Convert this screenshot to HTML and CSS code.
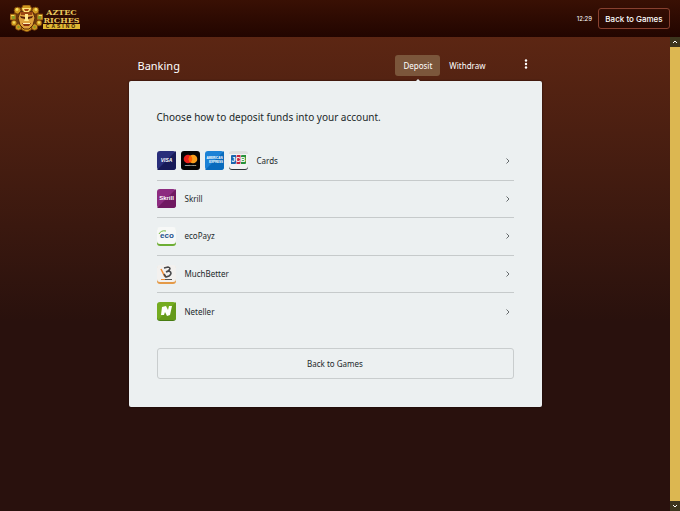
FILE: index.html
```html
<!DOCTYPE html>
<html lang="en">
<head>
    <meta charset="UTF-8">
    <meta name="viewport" content="width=device-width, initial-scale=1.0">
    <title>Banking - Aztec Riches Casino</title>
    <link rel="stylesheet" href="styles.css">
</head>
<body>
    <header class="header">
        <a class="logo" href="#" aria-label="Aztec Riches Casino">
            <svg class="logo-mask" viewBox="0 0 33 27" aria-hidden="true">
                <ellipse cx="16.500" cy="13.500" rx="14" ry="12" fill="#6b3b0c"/>
                <g fill="#cf981f" stroke="#6e360a" stroke-width=".8">
                    <path d="M11 4 13 0h7l2 4-2 4h-7z"/>
                    <circle cx="7.500" cy="5.500" r="3.400"/><circle cx="25.500" cy="5.500" r="3.400"/>
                    <path d="M0 9h6v6H0zM27 9h6v6h-6z"/>
                    <circle cx="4" cy="18" r="3"/><circle cx="29" cy="18" r="3"/>
                    <circle cx="8.500" cy="22" r="3.200"/><circle cx="24.500" cy="22" r="3.200"/>
                    <path d="M11 21h11l-1 4-4 2-5-2z"/>
                </g>
                <g fill="#f4dc5d">
                    <path d="M1 10h3v1H1zM29 10h3v1h-3z"/>
                    <circle cx="7" cy="4.500" r="1.400"/><circle cx="26" cy="4.500" r="1.400"/>
                    <circle cx="4" cy="17.500" r="1.200"/><circle cx="29" cy="17.500" r="1.200"/>
                </g>
                <g fill="#8a9a28">
                    <path d="M2 11h3v3H2zM28 11h3v3h-3z"/>
                    <circle cx="8.500" cy="22" r="1.200"/><circle cx="24.500" cy="22" r="1.200"/>
                </g>
                <path d="M10 7q6-3 13 0l2 6-2 7-4 4h-5l-4-4-2-7z" fill="#dfa23d" stroke="#5d2908"/>
                <path d="M10 7h13l-1 3H11z" fill="#9c4813"/>
                <path d="M12 3h9l-2 4h-5z" fill="#ffe278"/>
                <path d="M14 4h5l-1 2h-3z" fill="#a54713"/>
                <path d="M10 11l5 1v2l-4-1zM23 11l-5 1v2l4-1z" fill="#542009"/>
                <path d="M15 9h3v5l1 2h-5l1-2z" fill="#ffe88d"/>
                <path d="M12 18h9l-2 3h-5z" fill="#8b3311"/>
                <path d="M13 18h7v1h-7z" fill="#fff0b5"/>
            </svg>
            <span class="logo-text">
                <span class="logo-name">AZTEC</span>
                <span class="logo-name">RICHES</span>
                <span class="logo-casino">CASINO</span>
            </span>
        </a>
        <div class="header-right">
            <time class="clock">12:29</time>
            <button class="header-button" type="button">Back to Games</button>
        </div>
    </header>

    <div class="page">
        <main class="content">
            <div class="banking">
                <div class="toolbar">
                    <h1>Banking</h1>
                    <nav class="tabs" aria-label="Banking">
                        <a class="tab active" href="#" aria-current="page">Deposit</a>
                        <a class="tab" href="#">Withdraw</a>
                    </nav>
                    <button class="more" type="button" aria-label="More options">
                        <svg viewBox="0 0 4 10"><circle cx="2" cy="1.500" r="1.200"/><circle cx="2" cy="5" r="1.200"/><circle cx="2" cy="8.500" r="1.200"/></svg>
                    </button>
                </div>

                <section class="card">
                    <h2>Choose how to deposit funds into your account.</h2>
                    <ul class="methods">
                        <li>
                            <a class="method" href="#">
                                <span class="icons" aria-hidden="true">
                                    <svg class="icon" viewBox="0 0 19 19"><rect width="19" height="19" rx="3" fill="#292e7b"/><path d="M19 0v16a3 3 0 0 1-3 3H0z" fill="#171a59"/><text class="visa" x="9.500" y="11">VISA</text></svg>
                                    <svg class="icon" viewBox="0 0 19 19"><rect width="19" height="19" rx="3" fill="#050505"/><circle cx="7" cy="8" r="4.300" fill="#eb201b"/><circle cx="12" cy="8" r="4.300" fill="#f79e1b"/><path d="M9.500 4.500a4.300 4.300 0 0 1 0 7 4.300 4.300 0 0 1 0-7" fill="#ff5f00"/><text class="mastercard" x="9.500" y="15">mastercard</text></svg>
                                    <svg class="icon" viewBox="0 0 19 19"><rect width="19" height="19" rx="3" fill="#1c82d6"/><path d="M19 0v16a3 3 0 0 1-3 3H0z" fill="#086abd"/><text class="amex" x="9.500" y="8">AMERICAN</text><text class="amex" x="11" y="12">EXPRESS</text></svg>
                                    <svg class="icon" viewBox="0 0 19 19"><rect y="1" width="19" height="18" rx="3" fill="#303539"/><rect width="19" height="18" rx="3" fill="#f3f3f3"/><path d="M0 3a3 3 0 0 1 3-3h13a3 3 0 0 1 3 3H0z" fill="#dedede"/><path d="M2 5q0-1 1-1h4v8q0 1-1 1H2z" fill="#1c65ac"/><path d="M7.500 5q0-1 1-1h3v8q0 1-1 1h-3z" fill="#c52440"/><path d="M12 5q0-1 1-1h4v8q0 1-1 1h-4z" fill="#27913a"/><text class="jcb" x="9.500" y="11">JCB</text></svg>
                                </span>
                                <span>Cards</span>
                                <svg class="chevron" viewBox="0 0 4 6" aria-hidden="true"><path d="M.5.5 3 3 .5 5.500"/></svg>
                            </a>
                        </li>
                        <li>
                            <a class="method" href="#">
                                <svg class="icon" viewBox="0 0 19 19" aria-hidden="true"><rect width="19" height="19" rx="3" fill="#8d2c80"/><path d="M19 0v16a3 3 0 0 1-3 3H0z" fill="#701961"/><text class="skrill" x="9.500" y="11">Skrill</text></svg>
                                <span>Skrill</span>
                                <svg class="chevron" viewBox="0 0 4 6" aria-hidden="true"><path d="M.5.5 3 3 .5 5.500"/></svg>
                            </a>
                        </li>
                        <li>
                            <a class="method" href="#">
                                <svg class="icon" viewBox="0 0 19 19" aria-hidden="true"><rect y="1" width="19" height="18" rx="3" fill="#6eae35"/><rect width="19" height="17" rx="3" fill="#f7f8f7"/><path d="M2 7q2-4 7-3" fill="none" stroke="#73b83b"/><text class="eco" x="10" y="11">eco</text></svg>
                                <span>ecoPayz</span>
                                <svg class="chevron" viewBox="0 0 4 6" aria-hidden="true"><path d="M.5.5 3 3 .5 5.500"/></svg>
                            </a>
                        </li>
                        <li>
                            <a class="method" href="#">
                                <svg class="icon" viewBox="0 0 19 19" aria-hidden="true"><rect y="1" width="19" height="18" rx="3" fill="#e49a48"/><rect width="19" height="17" rx="3" fill="#f3f1ef"/><path d="m4 4 4 8" stroke="#ef8a33" stroke-width="1.500"/><path d="m7 3 4-1q4 1 0 4l-2 1 3-1q4 2 0 5l-3 1-2-3" fill="none" stroke="#48484a" stroke-width="1.600"/><path d="M4 14.500h4" stroke="#ef8a33"/><path d="M8 14.500h7" stroke="#555"/></svg>
                                <span>MuchBetter</span>
                                <svg class="chevron" viewBox="0 0 4 6" aria-hidden="true"><path d="M.5.5 3 3 .5 5.500"/></svg>
                            </a>
                        </li>
                        <li>
                            <a class="method" href="#">
                                <svg class="icon" viewBox="0 0 19 19" aria-hidden="true"><rect y="1" width="19" height="18" rx="3" fill="#477c12"/><rect width="19" height="18" rx="3" fill="#75ac21"/><path d="M19 0v15a3 3 0 0 1-3 3H1z" fill="#65991b"/><path d="M5 5l4-1 2 4 1-4h3l-2 9-3 1-2-4-1 3H4z" fill="#fff"/></svg>
                                <span>Neteller</span>
                                <svg class="chevron" viewBox="0 0 4 6" aria-hidden="true"><path d="M.5.5 3 3 .5 5.500"/></svg>
                            </a>
                        </li>
                    </ul>
                    <button class="back-button" type="button">Back to Games</button>
                </section>
            </div>
        </main>

        <div class="scrollbar">
            <button class="scroll-arrow" type="button" aria-label="Scroll up"><svg viewBox="0 0 6 4"><path d="m1 3 2-2 2 2"/></svg></button>
            <div class="scroll-thumb"></div>
            <button class="scroll-arrow" type="button" aria-label="Scroll down"><svg viewBox="0 0 6 4"><path d="m1 1 2 2 2-2"/></svg></button>
        </div>
    </div>
</body>
</html>
```

FILE: styles.css
```css
* {
    box-sizing: border-box;
}
body {
    display: flex;
    flex-direction: column;
    min-height: 100vh;
    margin: 0;
    background-color: #29110d;
    color: #22282a;
    font-family: "Noto Sans", "Open Sans", sans-serif;
    font-size: 8px;
    line-height: 12px;
}
button {
    padding: 0;
    border: 0;
    background: none;
    color: inherit;
    font: inherit;
    cursor: pointer;
}
a {
    color: inherit;
    text-decoration: none;
}
.header {
    display: flex;
    align-items: center;
    justify-content: space-between;
    height: 37px;
    padding: 0 10px;
    background: linear-gradient(#391004, #220500);
}
.logo {
    display: flex;
    align-items: center;
}
.logo-mask {
    width: 33px;
    height: 27px;
}
.logo-text {
    display: flex;
    flex-direction: column;
    width: 37px;
    color: #e9c85d;
    font-family: "DejaVu Serif", serif;
    font-weight: bold;
    text-align: center;
}
.logo-name {
    font-size: 8px;
    line-height: 8px;
}
.logo-casino {
    background-color: #dfb832;
    color: #351304;
    font-family: "Liberation Sans", sans-serif;
    font-size: 5px;
    line-height: 5px;
    letter-spacing: 2px;
}
.header-right {
    display: flex;
    align-items: center;
    gap: 6px;
    color: #fff;
    font-family: Inter, sans-serif;
}
.clock {
    font-size: 6px;
}
.header-button {
    width: 72px;
    height: 21px;
    border: 1px solid #87402f;
    border-radius: 3px;
    font-weight: 500;
}
.page {
    display: flex;
    flex: 1;
}
.content {
    flex: 1;
    padding: 18px 20px;
    background: linear-gradient(#5c2613, #29110d 60%);
}
.banking {
    max-width: 413px;
    margin: 0 auto;
}
.toolbar {
    display: flex;
    align-items: center;
    padding: 0 12px 5px 9px;
    color: #fff;
}
h1 {
    margin: 0 auto 0 0;
    font-size: 11px;
    font-weight: 400;
    line-height: 16px;
}
.tabs {
    display: flex;
    gap: 1px;
    margin-right: 28px;
}
.tab {
    position: relative;
    padding: 5px 8px 4px;
    border-radius: 3px;
}
.tab.active {
    background-color: #7b563b;
}
.tab.active::after {
    content: "";
    position: absolute;
    top: 100%;
    left: 50%;
    margin: 3px 0 0 -2px;
    border: 2px solid transparent;
    border-top: 0;
    border-bottom-color: #ecf0f1;
}
.more {
    display: flex;
    justify-content: center;
    width: 8px;
    padding-bottom: 4px;
}
.more svg {
    width: 4px;
    height: 10px;
    fill: #fff;
}
.card {
    padding: 28px;
    border-radius: 2px;
    background-color: #ecf0f1;
    box-shadow: 0 0 2px #160604;
}
h2 {
    margin: 0 0 17px;
    font-size: 10px;
    font-weight: 400;
    line-height: 16px;
}
.methods {
    display: grid;
    grid-auto-rows: 1fr;
    height: 188px;
    margin: 0 0 18px;
    padding: 0;
    list-style: none;
}
.methods li + li {
    border-top: 1px solid #c6cacb;
}
.method {
    display: flex;
    align-items: center;
    gap: 9px;
    height: 100%;
    padding-right: 4px;
}
.icons {
    display: flex;
    gap: 5px;
}
.icon {
    width: 19px;
    height: 19px;
}
.icon text {
    fill: #fff;
    font-family: "Liberation Sans", sans-serif;
    font-weight: bold;
    text-anchor: middle;
}
.icon .visa {
    font-size: 5px;
    font-style: italic;
}
.icon .mastercard {
    font-size: 2px;
}
.icon .amex {
    font-size: 3px;
}
.icon .jcb {
    font-size: 7px;
}
.icon .skrill {
    font-size: 6px;
}
.icon .eco {
    fill: #20508b;
    font-size: 8px;
}
.chevron {
    width: 4px;
    height: 6px;
    margin-left: auto;
    fill: none;
    stroke: #666b6d;
}
.back-button {
    display: block;
    width: 100%;
    height: 31px;
    border: 1px solid #c9cdce;
    border-radius: 3px;
}
.scrollbar {
    display: flex;
    flex-direction: column;
    width: 10px;
    background-color: #3c351d;
}
.scroll-thumb {
    flex: 1;
    background-color: #dcb751;
}
.scroll-arrow {
    display: flex;
    align-items: center;
    justify-content: center;
    height: 10px;
}
.scroll-arrow svg {
    width: 6px;
    height: 4px;
    fill: none;
    stroke: #fff;
}
```
